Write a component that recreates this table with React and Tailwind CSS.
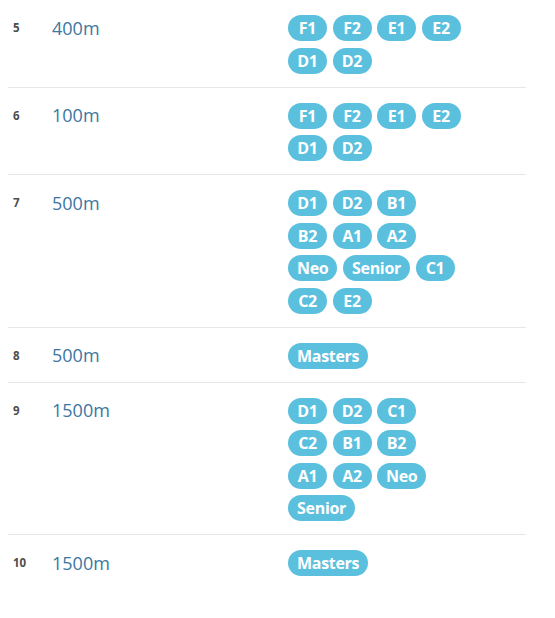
import React from "react";

const rows = [
  { n: "5", d: "400m", lines: [["F1", "F2", "E1", "E2"], ["D1", "D2"]] },
  { n: "6", d: "100m", lines: [["F1", "F2", "E1", "E2"], ["D1", "D2"]] },
  {
    n: "7",
    d: "500m",
    lines: [["D1", "D2", "B1"], ["B2", "A1", "A2"], ["Neo", "Senior", "C1"], ["C2", "E2"]],
  },
  { n: "8", d: "500m", lines: [["Masters"]] },
  {
    n: "9",
    d: "1500m",
    lines: [["D1", "D2", "C1"], ["C2", "B1", "B2"], ["A1", "A2", "Neo"], ["Senior"]],
  },
  { n: "10", d: "1500m", lines: [["Masters"]], last: true },
];

function Badge({ children }) {
  return (
    <span className="h-[26px] min-w-[39px] px-[9px] rounded-full bg-[#5bc0de] text-white font-bold text-[16px] leading-none flex items-center justify-center tracking-[-0.3px]">
      {children}
    </span>
  );
}

export default function App() {
  return (
    <div
      className="w-[555px] h-[618px] bg-white overflow-hidden"
      style={{ fontFamily: '"Open Sans", "Liberation Sans", sans-serif' }}
    >
      <div className="ml-[8px] w-[518px]">
        {rows.map((r, i) => (
          <div
            key={i}
            className={
              "flex pt-[15px] pb-[13px] " + (r.last ? "" : "border-b border-[#e6e6e6]")
            }
          >
            <div className="w-[44px] pl-[5px] h-[26px] flex items-center text-[11.5px] font-bold text-[#4d4d4d]">
              {r.n}
            </div>
            <div className="w-[236px] h-[26px] flex items-center text-[18px] text-[#3b77a1]">
              {r.d}
            </div>
            <div className="flex flex-col gap-y-[6.5px]">
              {r.lines.map((line, j) => (
                <div key={j} className="flex gap-x-[5.5px]">
                  {line.map((b, k) => (
                    <Badge key={k}>{b}</Badge>
                  ))}
                </div>
              ))}
            </div>
          </div>
        ))}
      </div>
    </div>
  );
}
